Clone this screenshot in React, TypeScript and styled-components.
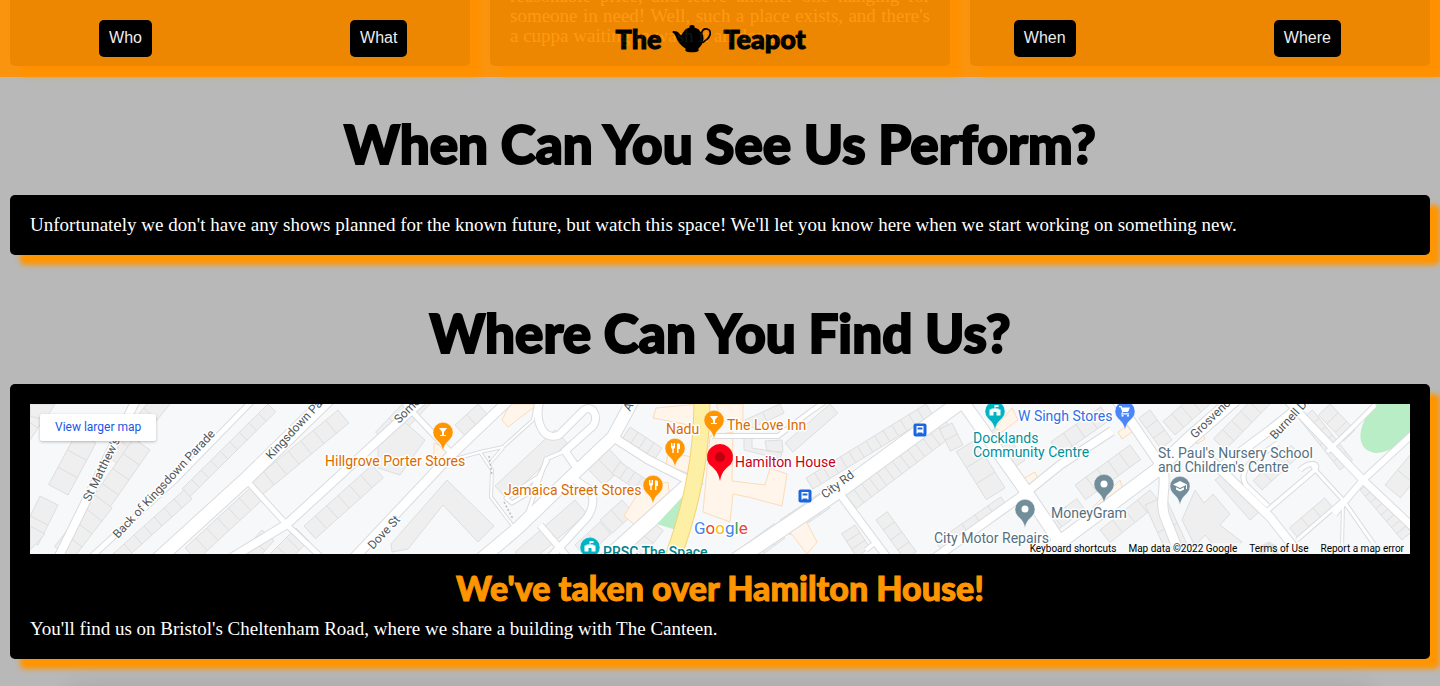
import React from "react";
import styled, { createGlobalStyle } from "styled-components";

const orange = "#ff9500";
const displayFont = `"Fredoka One", Lato, "Liberation Sans", sans-serif`;

const GlobalStyle = createGlobalStyle`
  *, *::before, *::after { box-sizing: border-box; }
  body {
    margin: 0;
    background: #b8b8b8;
    font-family: "Liberation Serif", "Times New Roman", serif;
    font-size: 19px;
    line-height: 20px;
  }
`;

const Page = styled.div`
  position: relative;
  min-height: 100vh;
  overflow: hidden;
  background: #b8b8b8;
`;

const Header = styled.header`
  position: fixed;
  inset: 0 0 auto;
  z-index: 2;
  padding: 20px 0;
  background: #ff9100;
  opacity: 0.93;
`;

const Nav = styled.nav`
  display: flex;
  justify-content: space-around;
  align-items: center;
`;

const NavButton = styled.button`
  padding: 9px 10px 11px;
  border: 0;
  border-radius: 5px;
  background: #000;
  color: #fff;
  font: 16px/17px "Liberation Sans", Arial, sans-serif;
  cursor: pointer;
`;

const Brand = styled.a`
  display: flex;
  align-items: center;
  gap: 11px;
  padding: 0 10px;
  color: #000;
  font: 900 27px/30px ${displayFont};
  -webkit-text-stroke: 1px currentColor;
  text-decoration: none;
`;

const Columns = styled.section`
  display: flex;
  align-items: flex-end;
  height: 76px;
  padding: 0 10px 10px;
`;

const ColumnGrid = styled.div`
  display: grid;
  grid-template-columns: repeat(3, 1fr);
  gap: 20px;
  width: 100%;
`;

const Card = styled.div`
  padding: 20px;
  border-radius: 5px;
  background: #000;
  color: #fff;
  box-shadow: 10px 10px 5px ${orange};
`;

const Paragraph = styled.p<{ $justify?: boolean }>`
  margin: 0;
  text-align: ${(p) => (p.$justify ? "justify" : "left")};
`;

const Section = styled.section`
  padding: 38px 10px 10px;
`;

const Title = styled.h1`
  margin: 0 0 22px;
  text-align: center;
  font: 900 53px/59px ${displayFont};
  -webkit-text-stroke: 2px currentColor;
`;

const Subtitle = styled.h2`
  margin: 0;
  padding: 14px 0 11px;
  text-align: center;
  color: ${orange};
  font: 900 34px/40px ${displayFont};
  -webkit-text-stroke: 1px currentColor;
`;

const MapFrame = styled.div`
  position: relative;
  height: 150px;
  overflow: hidden;
  background: #f7f8fa;
  font-family: Roboto, sans-serif;
`;

const MapDrawing = styled.svg`
  display: block;
  width: 100%;
  height: 100%;
`;

const LargerMapLink = styled.a`
  position: absolute;
  top: 10px;
  left: 10px;
  padding: 0 15px;
  border-radius: 2px;
  background: #fff;
  box-shadow: 0 1px 3px rgba(0, 0, 0, 0.25);
  color: #1a56e8;
  font-size: 12px;
  line-height: 27px;
  text-decoration: none;
`;

const MapCredits = styled.div`
  position: absolute;
  right: 0;
  bottom: 0;
  display: flex;
  gap: 12px;
  padding: 0 6px;
  background: rgba(247, 248, 250, 0.7);
  color: #000;
  font-size: 10px;
  line-height: 11px;
`;

const CreditLink = styled.a`
  color: inherit;
  text-decoration: none;
`;

const CreditButton = styled.button`
  padding: 0;
  border: 0;
  background: none;
  color: inherit;
  font: inherit;
`;

const Footer = styled.footer`
  margin: 17px 80px 0;
  height: 1px;
  box-shadow: 0 12px 24px 8px rgba(0, 0, 0, 0.14);
`;

const MapLabel = styled.text`
  font-size: 14px;
  paint-order: stroke;
  stroke: #fff;
  stroke-width: 3px;
  stroke-linejoin: round;
`;

const StreetLabel = styled(MapLabel)`
  font-size: 12px;
  fill: #50565b;
`;

const MapLogo = styled(MapLabel)`
  font-size: 17px;
`;

function Teapot() {
  return (
    <svg width="40" height="28" viewBox="0 0 40 28" aria-hidden="true">
      <path d="M17.600 2.600C16.800 1 18 0 20 0s3.200 1 2.400 2.600L25.500 3.800C27 4.400 27.500 5.200 27.800 6.200 30.200 7.600 31.500 10 31.500 13c0 5-2.500 8.200-5 10.400V26c-1.500 1.800-11.500 1.800-13 0v-2.600C11 22 8.500 20 6.500 17 4.500 14 4 10 .3 7.200L1 6c3.500.2 5 .6 6.200 2.300.8 1.200 1.300 1.900 2 1.900.8-1.600 1.700-2.900 3-4 .3-1 .8-1.800 2.300-2.400z" />
      <path d="M29.500 8.500C30.200 5 32.500 3.600 35 4c3.800.7 4 4.800 2 8-1.500 2.400-4.200 3.600-6.200 5.800" fill="none" stroke="#000" strokeWidth="1.700" />
    </svg>
  );
}

type Road = [d: string, width: number];

const roads: Road[] = [
  ["M57 560L137 398", 9],
  ["M88 560L175 480L255 398", 6],
  ["M157 560L247 478L329 398", 14],
  ["M248 482L287 525L324 560", 6],
  ["M228 560L287 524L384 435L425 398", 9],
  ["M352 560L450 456L511 398", 10],
  ["M405 404L451 453", 6],
  ["M452 460L480 452L503 447L533 420L537 398", 3],
  ["M480 452L492 470L491 497L513 526", 3],
  ["M490 463L503 448", 3],
  ["M541 475L506 498L512 503L530 492L548 460", 4],
  ["M541 398C533 420 543 442 559 435L583 411C591 403 600 416 593 426L565 451L577 468", 8],
  ["M565 451L546 459L541 475L527 515", 4],
  ["M480 560L517 529L577 471L613 437L634 398", 13],
  ["M613 437L647 459L688 480", 9],
  ["M572 478L590 490C596 500 592 514 582 523L548 560", 8],
  ["M698 477L637 532L606 560", 16],
  ["M540 525L570 560", 7],
  ["M712 436L778 436L810 412L830 398", 5],
  ["M736 560L843 488L966 398", 15],
  ["M837 490L889 560", 8],
  ["M866 550L876 542", 5],
  ["M960 398L1023 487L1072 560", 13],
  ["M932 560L1023 495L1060 465L1112 431", 9],
  ["M1036 560L1157 470L1188 440L1236 398", 14],
  ["M1115 398L1160 464C1170 480 1158 500 1165 517L1182 560", 10],
  ["M1205 455L1219 468L1270 517L1304 560", 9],
  ["M1219 468L1270 430L1310 398", 9],
  ["M1285 398L1363 480L1416 530", 8],
  ["M1334 514L1363 480L1416 431", 7],
  ["M1297 540L1343 500L1320 475L1312 466", 4],
  ["M1343 500L1342 550", 3],
  ["M1343 500L1385 560", 4],
  ["M1268 506L1246 485C1240 476 1245 468 1252 461L1278 443", 5],
  ["M1268 510L1315 470C1320 464 1310 460 1300 470", 5],
  ["M1327 452L1350 430L1375 405", 5],
];

/* Each terrace: start x, start y, end x, end y, depth, number of houses. */
const terraces: [number, number, number, number, number, number][] = [
  [54, 404, 30, 440, -14, 3],
  [96, 443, 68, 495, -22, 3],
  [58, 505, 38, 545, -20, 2],
  [170, 404, 120, 466, -18, 4],
  [150, 450, 108, 510, -20, 4],
  [112, 508, 72, 560, -22, 4],
  [268, 404, 182, 489, 11, 9],
  [184, 490, 104, 562, 12, 8],
  [338, 410, 251, 482, 17, 7],
  [250, 488, 185, 548, 17, 6],
  [262, 530, 235, 560, 16, 3],
  [372, 465, 304, 526, 17, 6],
  [296, 528, 268, 556, 18, 3],
  [430, 404, 390, 446, -20, 3],
  [478, 404, 455, 425, 16, 2],
  [555, 430, 495, 486, 18, 1],
  [575, 500, 515, 552, 18, 1],
  [608, 448, 587, 468, 24, 2],
  [630, 427, 662, 448, -16, 4],
  [620, 462, 650, 482, -14, 4],
  [622, 500, 600, 520, 18, 2],
  [600, 522, 575, 545, 16, 2],
  [650, 520, 630, 545, 17, 2],
  [926, 404, 806, 478, 13, 14],
  [945, 420, 846, 495, 17, 13],
  [830, 508, 790, 535, -18, 4],
  [785, 538, 755, 560, -18, 3],
  [876, 520, 905, 560, 14, 4],
  [855, 525, 870, 548, -16, 3],
  [975, 440, 1005, 488, -22, 3],
  [952, 423, 963, 445, -14, 2],
  [1010, 510, 945, 555, -16, 5],
  [1000, 425, 1025, 460, -18, 3],
  [1110, 420, 1060, 455, -16, 4],
  [1130, 445, 1075, 485, 18, 5],
  [1150, 490, 1100, 530, 16, 4],
  [1085, 510, 1050, 535, -14, 3],
  [1145, 505, 1170, 560, 22, 2],
  [1150, 410, 1172, 440, -14, 3],
  [1210, 404, 1175, 435, -18, 4],
  [1270, 404, 1225, 450, -16, 5],
  [1300, 420, 1340, 470, 16, 6],
  [1330, 404, 1355, 430, -16, 3],
  [1262, 490, 1300, 455, 13, 4],
  [1335, 510, 1300, 540, -16, 3],
  [1360, 490, 1402, 540, 12, 8],
  [1410, 455, 1385, 485, 20, 2],
  [1215, 480, 1250, 520, 16, 1],
  [780, 404, 745, 420, 10, 2],
  [830, 404, 785, 443, 12, 1],
];

function terraceGeometry([x1, y1, x2, y2, depth, count]: (typeof terraces)[number]) {
  const length = Math.hypot(x2 - x1, y2 - y1);
  const nx = (-(y2 - y1) / length) * -depth;
  const ny = ((x2 - x1) / length) * -depth;
  const outline = `M${x1} ${y1}L${x2} ${y2}L${x2 + nx} ${y2 + ny}L${x1 + nx} ${y1 + ny}Z`;
  let walls = "";
  for (let i = 1; i < count; i++) {
    const x = x1 + ((x2 - x1) * i) / count;
    const y = y1 + ((y2 - y1) * i) / count;
    walls += `M${x} ${y}l${nx} ${ny}`;
  }
  return outline + walls;
}

const glyphs: Record<string, React.ReactNode> = {
  bar: <path d="M-4-4H4L1 0V3H3V4H-3V3H-1V0Z" fill="#fff" />,
  food: (
    <path d="M-4-5v4c0 1 .5 1.500 1.300 1.700V5h1.400V.7C-.5.5 0 0 0-1v-4h-1v3h-.600v-3h-.8v3H-3v-3zM2-4.500V5h1.500V1H5v-4c0-1-1-2-3-1.500z" fill="#fff" />
  ),
  civic: (
    <path fillRule="evenodd" d="M-5.500 4.500V-1.500H-3.500V-2.500H-.5V-6H3.500V-4H.500V-2.500H3.500V-1.500H5.500V4.500ZM-1.500 4.500H1.500V1H-1.500Z" fill="#fff" />
  ),
  cart: (
    <g fill="#fff">
      <path d="M-6-5h2.500l.6 1.500H5L3 1h-5l-.7 1.200H4v1.200h-8L-2.800.5-4.500-3.800H-6z" />
      <circle cx="-2.500" cy="4.700" r="1" />
      <circle cx="3" cy="4.700" r="1" />
    </g>
  ),
  dot: <circle r="3.500" fill="#fff" />,
  school: <path d="M0-5L7-1.500V3H6V-1L0 2-7-1.500ZM-4 1.200L0 3.200 4 1.200V3.500L0 5.500-4 3.500Z" fill="#fff" />,
};

function Pin({ x, y, color, glyph }: { x: number; y: number; color: string; glyph: string }) {
  return (
    <g transform={`translate(${x} ${y})`}>
      <path
        d="M0 19C-1.500 12-4 10.500-7 7.500A10 10 0 1 1 7 7.500C4 10.500 1.500 12 0 19Z"
        fill={color}
        stroke="#fff"
        strokeWidth=".4"
      />
      {glyphs[glyph]}
    </g>
  );
}

function BusStop({ x, y }: { x: number; y: number }) {
  return (
    <g transform={`translate(${x} ${y})`}>
      <rect x="-6.500" y="-6.500" width="13" height="13" rx="2" fill="#1a66e0" />
      <path d="M-3.500-4h7v7.500h-1.200V2.500h-4.600v1h-1.200z" fill="#fff" />
      <path d="M-2.400-2.500h4.800v2h-4.800z" fill="#1a66e0" />
    </g>
  );
}

const streetLabels: [string, number, number, number][] = [
  ["St Matthew's", 90, 502, -64],
  ["Back of Kingsdown Parade", 118, 539, -47],
  ["Kingsdown Parade", 271, 460, -47],
  ["Somerset St", 399, 424, -45],
  ["Dove St", 373, 550, -47],
  ["Ashley Rd", 630, 412, -62],
  ["City Rd", 825, 499, -37],
  ["Grosvenor Rd", 1195, 439, -44],
  ["Burnell Dr", 1275, 440, -47],
];

const placeLabels: [string, number, number, string][] = [
  ["Hillgrove Porter Stores", 325, 466, "#d96b00"],
  ["Jamaica Street Stores", 504, 495, "#d96b00"],
  ["Nadu", 666, 434, "#d96b00"],
  ["The Love Inn", 727, 430, "#d96b00"],
  ["Hamilton House", 735, 467, "#c5001a"],
  ["Docklands", 973, 443, "#00929a"],
  ["Community Centre", 973, 457, "#00929a"],
  ["W Singh Stores", 1018, 421, "#2f6fe8"],
  ["St. Paul's Nursery School", 1158, 458, "#557080"],
  ["and Children's Centre", 1158, 472, "#557080"],
  ["MoneyGram", 1051, 518, "#557080"],
  ["City Motor Repairs", 934, 543, "#557080"],
];

function StreetMap() {
  return (
    <MapDrawing viewBox="30 404 1380 150" preserveAspectRatio="xMidYMid slice" role="img" aria-label="Map of Hamilton House">
      <rect x="30" y="404" width="1380" height="150" fill="#f7f8fa" />
      <g fill="#efefef" stroke="#dcdedf" strokeWidth="1">
        {terraces.map((t, i) => (
          <path key={i} d={terraceGeometry(t)} />
        ))}
        <path d="M391 544L447 480L494 526L478 542L443 505L408 549L392 552Z" />
        <path d="M30 404H55L45 420L30 416ZM30 526L45 534L30 550ZM378 442L400 418L425 440L400 475L378 468Z" />
        <path d="M1182 520L1195 490L1204 503L1213 494L1230 514L1220 525L1242 542L1225 558L1205 535L1195 546Z" />
        <path d="M744 434L752 434L752 448L782 453L780 459L744 450ZM765 441L782 440L783 452L767 451Z" />
      </g>
      <g fill="#fff5ea" stroke="#fbdcb8" strokeWidth="1">
        <path d="M510 404H538L508 427L502 420Z" />
        <path d="M656 408L698 404L696 428L684 424L653 418Z" />
        <path d="M668 452L696 458L690 474L666 465Z" />
        <path d="M434 443L452 450L444 460L434 455Z" />
        <path d="M640 490L668 482L669 492L635 525L624 516Z" />
        <path d="M710 436L733 432L732 481L765 485L770 468L787 474L782 506L748 497L733 494L730 522L703 512Z" />
        <path d="M716 404H743V421H722Z" />
        <path d="M790 532L805 519L817 542L807 554Z" />
        <path d="M995 428L1012 408L1018 420L1002 432ZM1021 480L1035 472L1038 479L1026 487Z" />
        <path d="M1080 520L1120 480L1123 490L1082 524ZM1118 432L1127 426L1132 432L1122 439ZM1195 438L1202 433L1205 439L1197 444Z" />
      </g>
      <ellipse cx="1389" cy="423" rx="35" ry="22" transform="rotate(-48 1389 423)" fill="#b9edc5" />
      <g fill="none" strokeLinejoin="round">
        {roads.map(([d, width]) => (
          <path key={d} d={d} stroke="#d9dcdf" strokeWidth={width + 1} />
        ))}
        {roads.map(([d, width]) => (
          <path key={d} d={d} stroke="#fff" strokeWidth={width - 1} />
        ))}
        <path d="M657 524L685 494L676 530Z" fill="#b9edc5" />
        <path d="M702 398C702 450 694 500 672 560" stroke="#f4d374" strokeWidth="17" />
        <path d="M702 398C702 450 694 500 672 560" stroke="#fdf0a5" strokeWidth="15" />
        <path d="M489 456L492 475M504 502L513 519" stroke="#b8bcc0" strokeWidth="1.500" strokeDasharray="2 2" />
      </g>
      {streetLabels.map(([name, x, y, angle]) => (
        <StreetLabel key={name} transform={`translate(${x} ${y}) rotate(${angle})`}>
          {name}
        </StreetLabel>
      ))}
      <Pin x={443} y={432} color="#ff9500" glyph="bar" />
      <Pin x={714} y={420} color="#ff9500" glyph="bar" />
      <Pin x={675} y={448} color="#ff9500" glyph="food" />
      <Pin x={653} y={485} color="#ff9500" glyph="food" />
      <Pin x={590} y={547} color="#00b4c4" glyph="civic" />
      <Pin x={995} y={411} color="#00b4c4" glyph="civic" />
      <Pin x={1125} y={411} color="#4a86f7" glyph="cart" />
      <Pin x={1025} y={509} color="#728e9b" glyph="dot" />
      <Pin x={1104} y={484} color="#728e9b" glyph="dot" />
      <Pin x={1180} y={486} color="#728e9b" glyph="school" />
      <Pin x={1269} y={552} color="#a9bac2" glyph="dot" />
      <path d="M720 481C718 470 713 468 709 464A13 13 0 1 1 731 464C727 468 722 470 720 481Z" fill="#fb0018" />
      <circle cx="720" cy="457" r="5" fill="#bd0010" />
      <BusStop x={920} y={430} />
      <BusStop x={805} y={496} />
      {placeLabels.map(([name, x, y, color]) => (
        <MapLabel key={name} x={x} y={y} fill={color}>
          {name}
        </MapLabel>
      ))}
      <MapLabel x="603" y="557" fill="#00838a" fontWeight="500">
        PRSC The Space
      </MapLabel>
      <MapLogo x="694" y="534">
        <tspan fill="#4285f4">G</tspan>
        <tspan fill="#ea4335">o</tspan>
        <tspan fill="#fbbc05">o</tspan>
        <tspan fill="#4285f4">g</tspan>
        <tspan fill="#34a853">l</tspan>
        <tspan fill="#ea4335">e</tspan>
      </MapLogo>
    </MapDrawing>
  );
}

export default function App() {
  return (
    <Page>
      <GlobalStyle />
      <Header>
        <Nav>
          <NavButton type="button">Who</NavButton>
          <NavButton type="button">What</NavButton>
          <Brand href="#top">
            The <Teapot /> Teapot
          </Brand>
          <NavButton type="button">When</NavButton>
          <NavButton type="button">Where</NavButton>
        </Nav>
      </Header>
      <main>
        <Columns>
          <ColumnGrid>
            <Card />
            <Card>
              <Paragraph $justify>
                Imagine a place where you can buy a cup of tea at a reasonable price, and leave another one hanging for
                someone in need! Well, such a place exists, and there's a cuppa waiting to wash it all down.
              </Paragraph>
            </Card>
            <Card />
          </ColumnGrid>
        </Columns>
        <Section id="when">
          <Title>When Can You See Us Perform?</Title>
          <Card>
            <Paragraph>
              Unfortunately we don't have any shows planned for the known future, but watch this space! We'll let you
              know here when we start working on something new.
            </Paragraph>
          </Card>
        </Section>
        <Section id="where">
          <Title>Where Can You Find Us?</Title>
          <Card>
            <MapFrame>
              <StreetMap />
              <LargerMapLink href="#map">View larger map</LargerMapLink>
              <MapCredits>
                <CreditButton type="button">Keyboard shortcuts</CreditButton>
                <span>Map data ©2022 Google</span>
                <CreditLink href="#terms">Terms of Use</CreditLink>
                <CreditLink href="#report">Report a map error</CreditLink>
              </MapCredits>
            </MapFrame>
            <Subtitle>We've taken over Hamilton House!</Subtitle>
            <Paragraph>
              You'll find us on Bristol's Cheltenham Road, where we share a building with The Canteen.
            </Paragraph>
          </Card>
        </Section>
      </main>
      <Footer />
    </Page>
  );
}
